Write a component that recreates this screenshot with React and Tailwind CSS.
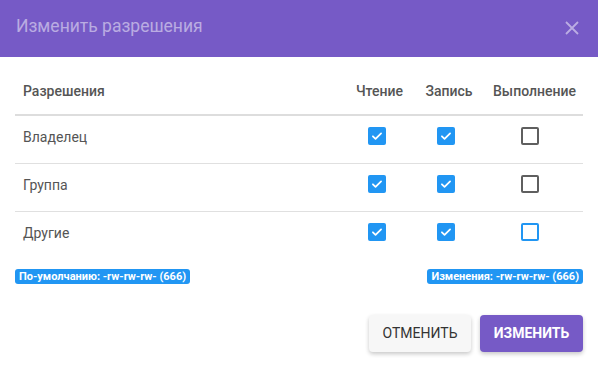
import React from "react";

function Check({ checked, focus }) {
  if (checked) {
    return (
      <div className="w-[18px] h-[18px] rounded-[2px] bg-[#2196f3] flex items-center justify-center">
        <svg width="14" height="14" viewBox="0 0 24 24" fill="none" stroke="white" strokeWidth="3" strokeLinecap="round" strokeLinejoin="round">
          <path d="M5 12.5l4.5 4.5L19 7.5" />
        </svg>
      </div>
    );
  }
  return (
    <div
      className={
        "w-[18px] h-[18px] rounded-[2px] border-2 " +
        (focus ? "border-[#2196f3]" : "border-[#5f5f5f]")
      }
    />
  );
}

const rows = [
  { name: "Владелец", r: true, w: true, x: false },
  { name: "Группа", r: true, w: true, x: false },
  { name: "Другие", r: true, w: true, x: false, focus: true },
];

export default function App() {
  return (
    <div
      className="w-[598px] h-[366px] bg-white flex flex-col overflow-hidden"
      style={{ fontFamily: "Roboto, 'Noto Sans', sans-serif" }}
    >
      <div className="h-[57px] bg-[#765ac6] flex items-center justify-between pl-[16px] pr-[19px] shrink-0">
        <div className="text-[17.5px] text-white/50 leading-none pb-[3px]">Изменить разрешения</div>
        <svg width="14" height="14" viewBox="0 0 14 14" stroke="rgba(255,255,255,0.5)" strokeWidth="1.8" className="mb-[1px]">
          <path d="M1 1L13 13M13 1L1 13" />
        </svg>
      </div>
      <div className="px-[15px] pt-[13px] flex flex-col">
        <div className="grid grid-cols-[1fr_68px_71px_100px] h-[46px] border-b-2 border-[#dddddd] items-center pb-[1px] text-[14px] font-medium text-[#555]">
          <div className="pl-[8px]">Разрешения</div>
          <div className="text-center pl-[3px]">Чтение</div>
          <div className="text-center pl-[3px]">Запись</div>
          <div className="text-center pl-[3px]">Выполнение</div>
        </div>
        {rows.map((row, i) => (
          <div
            key={row.name}
            className={
              "grid grid-cols-[1fr_68px_71px_100px] h-[48px] items-start pt-[11px] text-[14px] text-[#555] " +
              (i < rows.length - 1 ? "border-b border-[#e0e0e0]" : "")
            }
          >
            <div className="pl-[8px] leading-5">{row.name}</div>
            <div className="flex justify-center pr-[3px]">
              <Check checked={row.r} />
            </div>
            <div className="flex justify-center pr-[3px]">
              <Check checked={row.w} />
            </div>
            <div className="flex justify-center pr-[6px]">
              <Check checked={row.x} focus={row.focus} />
            </div>
          </div>
        ))}
        <div className="flex justify-between mt-[9px]">
          <span className="bg-[#2196f3] text-white text-[11px] font-bold leading-[15px] px-[4px] rounded-[3px]">
            По-умолчанию: -rw-rw-rw- (666)
          </span>
          <span className="bg-[#2196f3] text-white text-[11px] font-bold leading-[15px] px-[4px] rounded-[3px]">
            Изменения: -rw-rw-rw- (666)
          </span>
        </div>
        <div className="flex justify-end gap-[9px] mt-[31px]">
          <button className="w-[102px] h-[37px] rounded-[4px] bg-[#f7f7f7] text-[#333] text-[14px] font-normal shadow-[0_2px_4px_rgba(0,0,0,0.22)]">
            ОТМЕНИТЬ
          </button>
          <button className="w-[103px] h-[37px] rounded-[4px] bg-[#765ac6] text-white text-[14px] font-bold shadow-[0_2px_4px_rgba(0,0,0,0.22)]">
            ИЗМЕНИТЬ
          </button>
        </div>
      </div>
    </div>
  );
}
